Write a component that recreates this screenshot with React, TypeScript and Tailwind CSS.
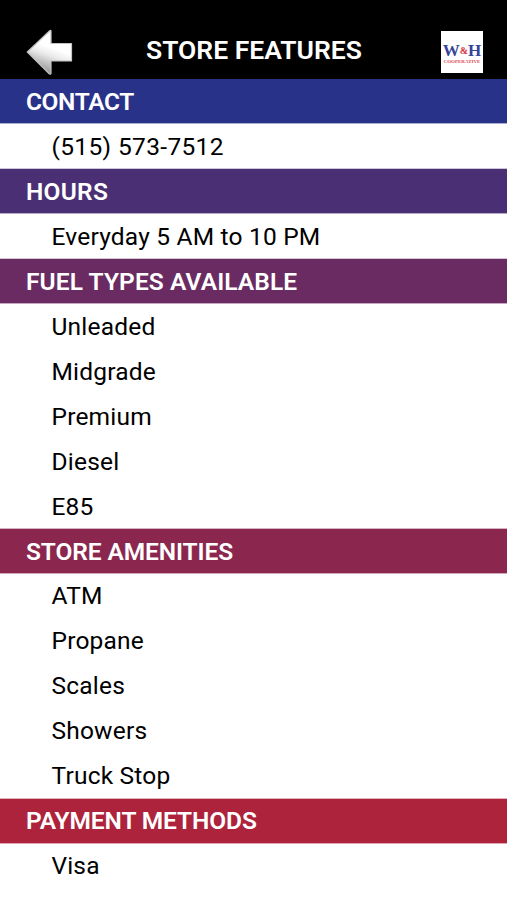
import React from 'react';

const sections = [
  {
    title: 'CONTACT',
    heading: 'bg-[#283289] border-[#a9add0] leading-[45px] tracking-[-0.4px]',
    row: 'last:border-[#cdc6d9] leading-[45px] tracking-[0.35px]',
    items: ['(515) 573-7512'],
  },
  {
    title: 'HOURS',
    heading: 'bg-[#4a2f75] border-[#b7acc8] leading-[45px] tracking-[0.25px]',
    row: 'last:border-[#d3c2d1] leading-[45px] tracking-[0.2px]',
    items: ['Everyday 5 AM to 10 PM'],
  },
  {
    title: 'FUEL TYPES AVAILABLE',
    heading: 'bg-[#6a2b62] border-[#c3aac0] leading-[45px] tracking-[0.1px]',
    row: 'last:border-[#d5b3c0] leading-[45px] tracking-[0.2px]',
    items: ['Unleaded', 'Midgrade', 'Premium', 'Diesel', 'E85'],
  },
  {
    title: 'STORE AMENITIES',
    heading: 'bg-[#8b274e] border-[#d0a9b8] leading-[45px] tracking-[-0.1px]',
    row: 'last:border-[#e2b3bb] leading-[43px] tracking-[0.2px]',
    items: ['ATM', 'Propane', 'Scales', 'Showers', 'Truck Stop'],
  },
  {
    title: 'PAYMENT METHODS',
    heading: 'bg-[#ad233b] border-[#dea7b1] leading-[43px] tracking-[-0.1px]',
    row: 'last:border-white leading-[43px] tracking-[0.15px]',
    items: ['Visa'],
  },
];

const BackArrow = () => (
  <svg width="48" height="48" viewBox="0 0 48 48">
    <defs>
      <linearGradient id="arrow" x1="0.58" y1="0.4" x2="0.38" y2="0.95">
        <stop offset="0" stopColor="#ffffff" />
        <stop offset="0.3" stopColor="#ececec" />
        <stop offset="1" stopColor="#959595" />
      </linearGradient>
    </defs>
    <path
      d="M2.3 24 L25 2.5 Q26 2 26 3.5 V15.5 H46.5 V33 H26 V45 Q26 46.5 24.5 46 Z"
      fill="url(#arrow)"
      stroke="#c4c4c4"
      strokeWidth="1.2"
      strokeLinejoin="round"
    />
  </svg>
);

const Logo = () => (
  <div className="flex h-[42px] w-[42px] flex-col items-center bg-white pt-[12px] font-['Liberation_Serif',serif] font-bold">
    <div className="flex h-[15px] items-center text-[17px] leading-[15px] text-[#35439a]">
      <span>W</span>
      <span className="text-[10px] leading-[15px] text-[#d8323e]">&amp;</span>
      <span>H</span>
    </div>
    <span className="text-[5px] leading-[7px] text-[#dc4a55]">COOPERATIVE</span>
  </div>
);

const App = () => {
  return (
    <div className="h-[900px] w-[507px] overflow-hidden bg-white font-['Roboto',sans-serif] text-black">
      <header className="flex h-[79px] items-center justify-between bg-black pt-[25px] pr-6 pl-[25px]">
        <BackArrow />
        <h1 className="mr-1.5 pb-[5px] text-[26.5px] font-semibold text-white">STORE FEATURES</h1>
        <Logo />
      </header>
      {sections.map((section) => (
        <section key={section.title}>
          <h2 className={`h-[45px] border-b pl-[26px] text-[24.5px] font-semibold text-white ${section.heading}`}>
            {section.title}
          </h2>
          <ul>
            {section.items.map((item) => (
              <li key={item} className={`h-[45px] pl-[51.5px] text-[24.5px] last:border-b ${section.row}`}>
                {item}
              </li>
            ))}
          </ul>
        </section>
      ))}
    </div>
  );
};

export default App;
